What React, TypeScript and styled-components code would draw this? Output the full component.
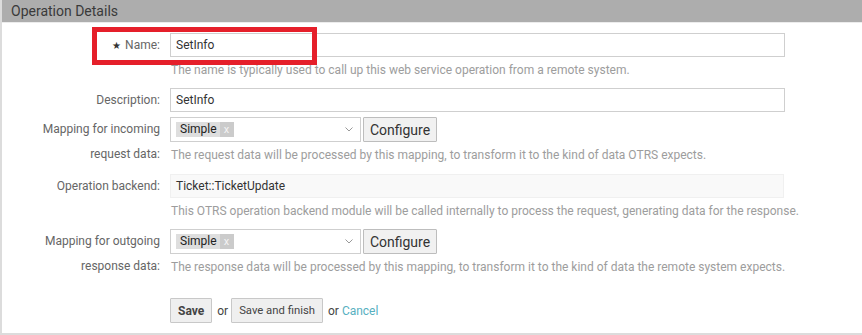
import React from "react";
import styled, { createGlobalStyle } from "styled-components";

const GlobalStyle = createGlobalStyle`
  html, body { margin: 0; padding: 0; background: #fff; }
  body { font-family: Roboto, "Liberation Sans", Arial, sans-serif; }
  * { box-sizing: border-box; }
`;

const Widget = styled.section`
  position: relative;
  width: 862px;
  border-left: 2px solid #dcdcdc;
  border-bottom: 3px solid #dcdcdc;
  background: #fff;
`;

const Header = styled.h2`
  margin: 0;
  height: 23px;
  padding-left: 9px;
  background: #adadad;
  border-bottom: 1px solid #ececec;
  font-size: 14px;
  font-weight: 400;
  line-height: 22px;
  color: #3a3a3a;
`;

const Body = styled.div`
  display: flex;
  flex-direction: column;
  padding: 10px 0 10px;
`;

const Row = styled.div<{ $after: number }>`
  display: grid;
  grid-template-columns: 158px 615px;
  column-gap: 10px;
  margin-bottom: ${(p) => p.$after}px;
`;

const Label = styled.label<{ $lh?: number }>`
  justify-self: end;
  max-width: 140px;
  max-height: 46px;
  text-align: right;
  font-size: 12px;
  line-height: ${(p) => p.$lh ?? 24}px;
  color: #666;
`;

const Star = styled.span`
  font-size: 10px;
  color: #333;
  margin-right: 4px;
`;

const Field = styled.div`
  display: flex;
  flex-direction: column;
`;

const TextInput = styled.input`
  width: 615px;
  height: 24px;
  margin: 0;
  padding: 0 5px;
  border: 1px solid #cfcfcf;
  background: #fff;
  font-family: Roboto, "Liberation Sans", Arial, sans-serif;
  font-size: 12px;
  color: #333;
  outline: none;
`;

const Readonly = styled.div`
  width: 614px;
  height: 24px;
  margin-top: 1px;
  padding: 0 5px;
  border: 1px solid #f0f0f0;
  background: #f9f9f9;
  font-size: 12px;
  line-height: 23px;
  color: #333;
`;

const Hint = styled.p`
  margin: 5px 0 0;
  padding-left: 1px;
  font-size: 12px;
  line-height: 16px;
  white-space: nowrap;
  color: #9d9d9d;
`;

const Inline = styled.div`
  display: flex;
  align-items: center;
  gap: 2px;
`;

const Select = styled.div`
  display: flex;
  align-items: center;
  width: 191px;
  height: 25px;
  padding: 0 7px 0 5px;
  border: 1px solid #cfcfcf;
  background: #fff;
`;

const Tag = styled.span`
  display: flex;
  align-items: stretch;
  height: 15px;
  background: #dedede;
  font-size: 12px;
  line-height: 15px;
  color: #222;
`;

const TagText = styled.span`
  padding: 0 3px 0 4px;
`;

const TagRemove = styled.span`
  width: 14px;
  text-align: center;
  background: #cbcbcb;
  color: #f4f4f4;
  font-size: 11px;
`;

const Chevron = styled.svg`
  margin-left: auto;
`;

const Button = styled.button<{ $bold?: boolean }>`
  height: 25px;
  margin: 0;
  padding: 0 7px;
  border: 1px solid #c8c8c8;
  border-radius: 1px;
  background: #efefef;
  font-family: Roboto, "Liberation Sans", Arial, sans-serif;
  font-size: ${(p) => (p.$bold ? 12 : 11.3)}px;
  font-weight: ${(p) => (p.$bold ? 700 : 400)};
  color: #444;
  cursor: pointer;
`;

const ConfigureButton = styled(Button)`
  width: 74px;
  padding: 0;
  font-size: 14px;
  color: #333;
  background: #f1f1f1;
  border-color: #bdbdbd;
`;

const Actions = styled.div`
  display: flex;
  align-items: center;
  font-size: 12px;
  color: #444;
`;

const Or = styled.span`
  margin: 0 3px 0 5px;
`;

const LinkCancel = styled.a`
  margin-left: 0;
  color: #57b0bf;
  text-decoration: none;
`;

const Annotation = styled.div`
  position: absolute;
  left: 90px;
  top: 27px;
  width: 225px;
  height: 38px;
  border: 5px solid #e51f2a;
  pointer-events: none;
`;

function MappingSelect() {
  return (
    <Inline>
      <Select>
        <Tag>
          <TagText>Simple</TagText>
          <TagRemove>x</TagRemove>
        </Tag>
        <Chevron width="8" height="5" viewBox="0 0 8 5">
          <path d="M0.5 0.5 L4 4 L7.5 0.5" fill="none" stroke="#999" strokeWidth="1" />
        </Chevron>
      </Select>
      <ConfigureButton type="button">Configure</ConfigureButton>
    </Inline>
  );
}

export default function App() {
  return (
    <>
      <GlobalStyle />
      <Widget>
        <Header>Operation Details</Header>
        <Body>
          <Row $after={10}>
            <Label>
              <Star>★</Star>Name:
            </Label>
            <Field>
              <TextInput defaultValue="SetInfo" />
              <Hint>The name is typically used to call up this web service operation from a remote system.</Hint>
            </Field>
          </Row>
          <Row $after={5}>
            <Label>Description:</Label>
            <Field>
              <TextInput defaultValue="SetInfo" />
            </Field>
          </Row>
          <Row $after={10}>
            <Label $lh={25}>Mapping for incoming request data:</Label>
            <Field>
              <MappingSelect />
              <Hint>The request data will be processed by this mapping, to transform it to the kind of data OTRS expects.</Hint>
            </Field>
          </Row>
          <Row $after={10}>
            <Label $lh={26}>Operation backend:</Label>
            <Field>
              <Readonly>Ticket::TicketUpdate</Readonly>
              <Hint>This OTRS operation backend module will be called internally to process the request, generating data for the response.</Hint>
            </Field>
          </Row>
          <Row $after={23}>
            <Label $lh={25}>Mapping for outgoing response data:</Label>
            <Field>
              <MappingSelect />
              <Hint>The response data will be processed by this mapping, to transform it to the kind of data the remote system expects.</Hint>
            </Field>
          </Row>
          <Row $after={0}>
            <span />
            <Actions>
              <Button $bold type="button">Save</Button>
              <Or>or</Or>
              <Button type="button">Save and finish</Button>
              <Or>or</Or>
              <LinkCancel href="#">Cancel</LinkCancel>
            </Actions>
          </Row>
        </Body>
        <Annotation />
      </Widget>
    </>
  );
}
